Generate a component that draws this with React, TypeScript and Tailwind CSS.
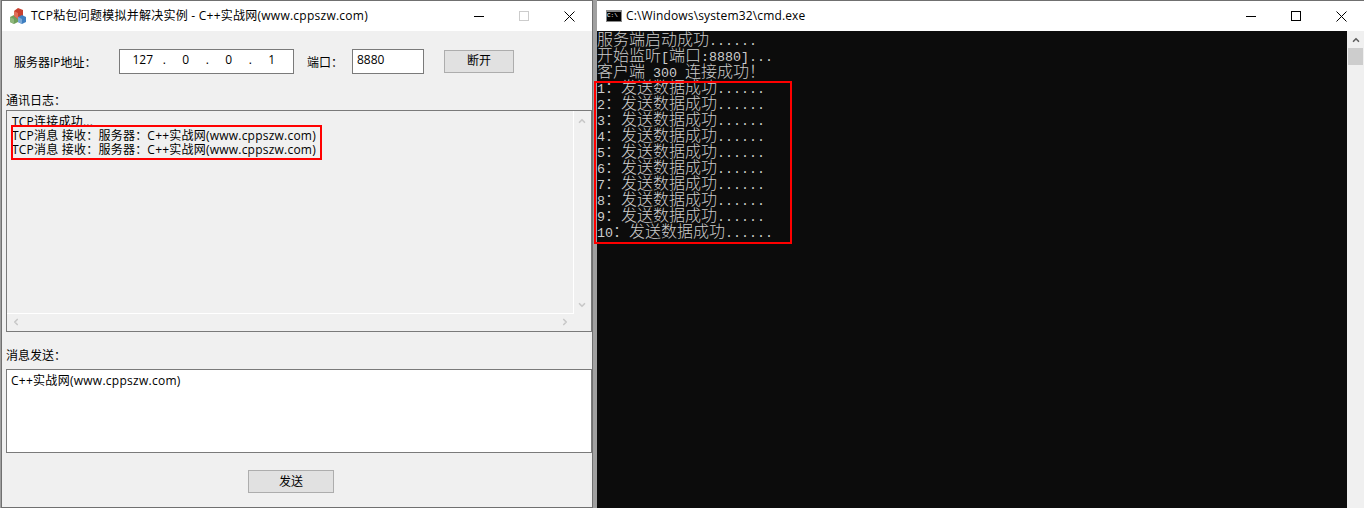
import { ChevronUp, ChevronDown, ChevronLeft, ChevronRight } from 'lucide-react';

const uiFont = "font-['Open_Sans','Noto_Sans_CJK_SC',sans-serif]";

function Cn({ children }: { children: string }) {
  return <span className="text-[16px] font-['Noto_Sans_CJK_SC',sans-serif] font-light">{children}</span>;
}

function ConsoleLine({ parts }: { parts: [string, boolean][] }) {
  return (
    <div className="h-4 leading-4 whitespace-pre">
      {parts.map(([t, cjk], i) => (cjk ? <Cn key={i}>{t}</Cn> : <span key={i}>{t}</span>))}
    </div>
  );
}

function Field({ className, children }: { className: string; children?: React.ReactNode }) {
  return <div className={`bg-white border border-[#7a7a7a] text-black text-[12px] ${className}`}>{children}</div>;
}

// three little cubes, app icon of the left window
function Logo() {
  return (
    <svg width="16" height="16" viewBox="0 0 16 16">
      <polygon points="0,9 4,7 8,9 8,14 4,16 0,14" fill="#6f9f5c" />
      <polygon points="0,9 4,11 4,16 0,14" fill="#8fb77c" />
      <polygon points="4,3 8,0 13,2 13,8 8,11 4,8" fill="#c8402f" />
      <polygon points="4,3 8,5 8,11 4,8" fill="#e0705a" />
      <polygon points="8,9 12,7 16,9 16,14 12,16 8,14" fill="#3f7fc0" />
      <polygon points="8,9 12,11 12,16 8,14" fill="#7aa8d8" />
    </svg>
  );
}

function WinButtons({ maxColor }: { maxColor: string }) {
  return (
    <div className="flex h-full shrink-0">
      <div className="w-[45px] flex items-center justify-center">
        <div className="w-[10px] h-px bg-black mt-px" />
      </div>
      <div className="w-[45px] flex items-center justify-center">
        <div className={`w-[10px] h-[10px] border ${maxColor}`} />
      </div>
      <div className="w-[46px] flex items-center justify-center">
        <svg width="11" height="11" viewBox="0 0 11 11" stroke="black" strokeWidth="1">
          <path d="M0.5 0.5 L10.5 10.5 M10.5 0.5 L0.5 10.5" />
        </svg>
      </div>
    </div>
  );
}

const rows = ['1', '2', '3', '4', '5', '6', '7', '8', '9', '10'];
const arrow = 'absolute text-[#c8c8c8]';

export default function App() {
  return (
    <div className={`flex w-[1364px] h-[508px] overflow-hidden bg-[#a0a0a0] ${uiFont}`}>
      {/* Left window */}
      <div className="ml-px w-[592px] h-full flex flex-col bg-[#f0f0f0] border border-[#707070] relative">
        <div className="h-[30px] bg-white flex items-center shrink-0 text-[12px] text-black">
          <div className="ml-[8px] mr-[5px]"><Logo /></div>
          <span className="flex-1 tracking-[0.25px]">TCP粘包问题模拟并解决实例 - C++实战网(www.cppszw.com)</span>
          <WinButtons maxColor="border-[#cccccc]" />
        </div>

        <div className="flex-1 flex flex-col pl-[4px] text-[12px] text-black">
          <div className="flex items-center h-[26px] mt-[17px] ml-[8px]">
            <span className="w-[105px] pt-[3px]">服务器IP地址：</span>
            <Field className="w-[175px] h-[25px] grid grid-cols-[repeat(7,21.5px)] items-center justify-items-center pl-[12px] pb-[3px]">
              <span>127</span><span>.</span><span>0</span><span>.</span><span>0</span><span>.</span><span>1</span>
            </Field>
            <span className="ml-[13px] w-[45px] pt-[3px]">端口：</span>
            <Field className="w-[72px] h-[25px] flex items-center px-[4px] pb-[3px]">8880</Field>
            <button className="ml-[20px] w-[70px] h-[23px] bg-[#e1e1e1] border border-[#adadad]">断开</button>
          </div>

          <div className="mt-[19px] h-[16px] leading-[16px]">通讯日志：</div>

          <div className="h-[222px] mt-px border border-[#7a7a7a] relative">
            <div className="absolute inset-0 mr-[17px] mb-[17px] border-r border-b border-white pl-[5px] pt-[4px] leading-[14px] tracking-[0.22px]">
              <div>TCP连接成功...</div>
              <div>TCP消息 接收：服务器：C++实战网(www.cppszw.com)</div>
              <div>TCP消息 接收：服务器：C++实战网(www.cppszw.com)</div>
            </div>
            <ChevronUp size={10} strokeWidth={4} className={`${arrow} right-[4px] top-[5px]`} />
            <ChevronDown size={10} strokeWidth={4} className={`${arrow} right-[4px] bottom-[21px]`} />
            <ChevronLeft size={10} strokeWidth={4} className={`${arrow} left-[4px] bottom-[4px]`} />
            <ChevronRight size={10} strokeWidth={4} className={`${arrow} right-[21px] bottom-[4px]`} />
          </div>

          <div className="mt-[16px] h-[16px] leading-[16px]">消息发送：</div>

          <Field className="mt-[5px] h-[84px] pl-[4px] pt-[2px] tracking-[0.27px]">C++实战网(www.cppszw.com)</Field>

          <button className="mt-[17px] self-start ml-[242px] w-[86px] h-[23px] bg-[#e1e1e1] border border-[#adadad]">发送</button>
        </div>

        <div className="absolute left-[9px] top-[124px] w-[311px] h-[35px] border-2 border-[#f00]" />
      </div>

      {/* Right window */}
      <div className="ml-[4px] flex-1 h-full flex flex-col relative">
        <div className="h-[31px] bg-white border-t border-[#707070] flex items-center shrink-0 text-[12px] text-black">
          <div className="ml-[9px] mr-[4px] w-[16px] h-[12px] bg-black border border-[#888] border-t-2 text-[6px] leading-[8px] text-white font-['Liberation_Mono',monospace]">C:\</div>
          <span className="flex-1 tracking-[0.15px]">C:\Windows\system32\cmd.exe</span>
          <WinButtons maxColor="border-black" />
        </div>
        <div className="flex-1 flex min-h-0">
          <div className="flex-1 bg-[#0c0c0c] text-[#cccccc] text-[13.33px] font-['Liberation_Mono',monospace]">
            <div className="-mt-px">
              <ConsoleLine parts={[['服务端启动成功', true], ['......', false]]} />
              <ConsoleLine parts={[['开始监听', true], ['[', false], ['端口', true], [':8880]...', false]]} />
              <ConsoleLine parts={[['客户端', true], [' 300 ', false], ['连接成功！', true]]} />
              {rows.map((n) => (
                <ConsoleLine key={n} parts={[[n, false], ['：发送数据成功', true], ['......', false]]} />
              ))}
            </div>
          </div>
          <div className="w-[17px] bg-[#f0f0f0]">
            <ChevronUp size={10} strokeWidth={4} className="mx-auto mt-[4px] text-[#606060]" />
            <div className="h-[17px] mt-[3px] mx-px bg-[#cdcdcd]" />
          </div>
        </div>
        <div className="absolute left-[-3px] top-[81px] w-[198px] h-[163px] border-2 border-[#f00]" />
      </div>
    </div>
  );
}
